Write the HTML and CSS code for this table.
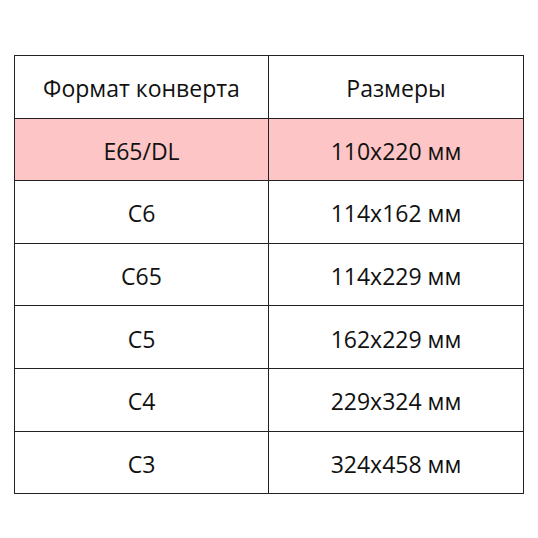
FILE: index.html
```html
<!DOCTYPE html>
<html lang="ru">
<head>
<meta charset="utf-8">
<link rel="stylesheet" href="styles.css">
</head>
<body>
<div class="page">
<table class="sizes">
<tr><td>Формат конверта</td><td>Размеры</td></tr>
<tr class="hl"><td>E65/DL</td><td>110x220 мм</td></tr>
<tr><td>C6</td><td>114x162 мм</td></tr>
<tr><td>C65</td><td>114x229 мм</td></tr>
<tr><td>C5</td><td>162x229 мм</td></tr>
<tr><td>C4</td><td>229x324 мм</td></tr>
<tr><td>C3</td><td>324x458 мм</td></tr>
</table>
</div>
</body>
</html>
```
FILE: styles.css
```css
html, body { margin: 0; padding: 0; background: #fff; }
.page { padding: 55px 0 0 14px; }
.sizes {
  border-collapse: collapse;
  font-family: "Open Sans", "Noto Sans", sans-serif;
  font-size: 23px;
  color: #111;
}
.sizes td {
  border: 1px solid #222;
  width: 254px;
  height: 62.6px;
  padding: 3px 0 0;
  box-sizing: border-box;
  text-align: center;
  vertical-align: middle;
}
.sizes td + td { width: 255px; }
.sizes .hl td { background: #fdc5c5; }
```
